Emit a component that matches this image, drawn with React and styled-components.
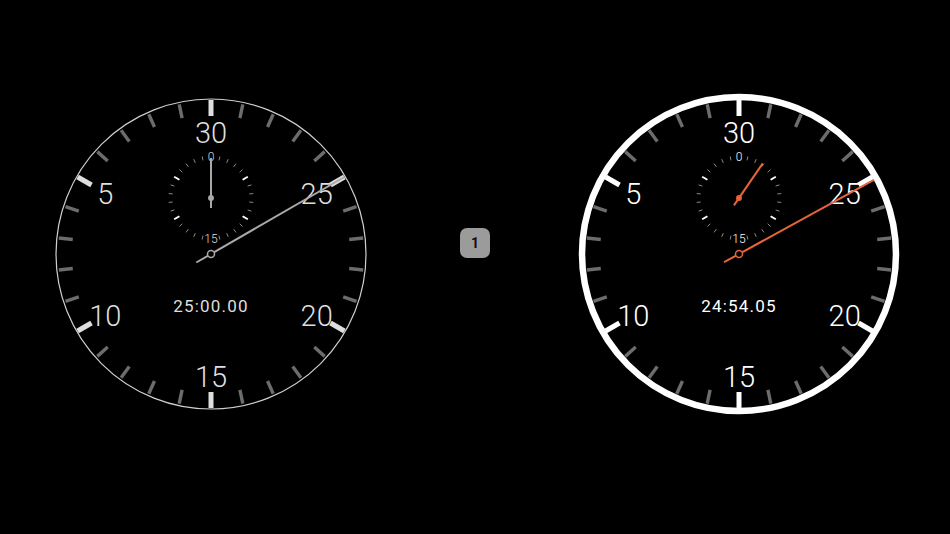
import React from 'react';
import styled, {createGlobalStyle} from "styled-components";

const GlobalStyle = createGlobalStyle`
  html, body { margin: 0; padding: 0; background: #000; }
  body { width: 950px; height: 534px; overflow: hidden; font-family: Roboto, "Liberation Sans", sans-serif; }
`

const Page = styled.div`
  width: 950px;
  height: 534px;
  box-sizing: border-box;
  padding-top: 89px;
  display: flex;
  justify-content: center;
  align-items: flex-start;
  gap: 84px;
`

const DialSvg = styled.svg`
  width: 330px;
  height: 330px;
  flex: none;
  display: block;
`

const CenterSlot = styled.div`
  padding-top: 139px;
`

const LapButton = styled.div`
  width: 30px;
  height: 30px;
  border-radius: 7px;
  background: #9b9b9b;
  color: #111;
  font-family: Roboto, "Liberation Sans", sans-serif;
  font-weight: 700;
  font-size: 14px;
  display: flex;
  align-items: center;
  justify-content: center;
`

const Ring = styled.circle`
  fill: none;
  stroke: ${p => p.$bold ? '#fff' : '#cfcfcf'};
  stroke-width: ${p => p.$bold ? 6.5 : 1.2};
`

const Tick = styled.line`
  stroke: ${p => p.$color};
  stroke-width: ${p => p.$w};
`

const Numeral = styled.text`
  fill: ${p => p.$color};
  font-family: Roboto, "Liberation Sans", sans-serif;
  font-weight: 300;
  font-size: ${p => p.$size}px;
  text-anchor: middle;
  dominant-baseline: central;
`

const Readout = styled.text`
  fill: ${p => p.$color};
  font-family: Roboto, "Liberation Sans", sans-serif;
  font-weight: 400;
  font-size: 17px;
  letter-spacing: 1.2px;
  text-anchor: middle;
  dominant-baseline: central;
`

const Hand = styled.line`
  stroke: ${p => p.$color};
  stroke-width: ${p => p.$w || 2};
`

const Pivot = styled.circle`
  fill: ${p => p.$filled ? p.$color : '#000'};
  stroke: ${p => p.$color};
  stroke-width: 1.5;
`

const polar = (r, deg) => {
    const a = deg * Math.PI / 180;
    return [r * Math.sin(a), -r * Math.cos(a)];
};

const SUB_Y = -56;

const Dial = ({bold, time, main, sub, hand}) => {
    const bright = bold ? '#fff' : '#dedede';
    const ticks = Array.from({length: 30}, (_, i) => i);
    return (
        <DialSvg viewBox="-165 -165 330 330">
            <Ring r={bold ? 157 : 155} $bold={bold}/>
            {ticks.map(i => {
                const major = i % 5 === 0;
                const [x1, y1] = polar(major ? 138 : 139, -i * 12);
                const [x2, y2] = polar(major ? 154 : 153, -i * 12);
                return <Tick key={i} x1={x1} y1={y1} x2={x2} y2={y2}
                             $color={major ? bright : '#6c6c6c'} $w={major ? 5 : 3.4}/>;
            })}
            {[0, 5, 10, 15, 20, 25].map(n => {
                const [x, y] = polar(122, -n * 12);
                return <Numeral key={n} x={x} y={y + 1} $size={29} $color={bright}>{n === 0 ? 30 : n}</Numeral>;
            })}
            <g transform={`translate(0 ${SUB_Y})`}>
                {ticks.filter(i => i !== 0 && i !== 15).map(i => {
                    const major = i % 5 === 0;
                    const [x1, y1] = polar(major ? 36.5 : 38.5, i * 12);
                    const [x2, y2] = polar(42.5, i * 12);
                    return <Tick key={i} x1={x1} y1={y1} x2={x2} y2={y2}
                                 $color={major ? '#fff' : '#8a8a8a'} $w={major ? 2 : 1}/>;
                })}
                <Numeral x={0} y={-41} $size={12} $color={bright}>0</Numeral>
                <Numeral x={0} y={41} $size={12} $color={bright}>15</Numeral>
                {(() => {
                    const [x1, y1] = polar(-sub.tail, sub.angle);
                    const [x2, y2] = polar(sub.len, sub.angle);
                    return <Hand x1={x1} y1={y1} x2={x2} y2={y2} $color={hand}/>;
                })()}
                <Pivot r={2.2} $filled $color={hand}/>
            </g>
            <Readout x={0} y={52} $color={bright}>{time}</Readout>
            {(() => {
                const [x1, y1] = polar(-17, main);
                const [x2, y2] = polar(154, main);
                return <Hand x1={x1} y1={y1} x2={x2} y2={y2} $color={hand}/>;
            })()}
            <Pivot r={3.5} $color={hand}/>
        </DialSvg>
    );
};

const App = () => {
    return (<>
        <GlobalStyle/>
        <Page>
            <Dial time="25:00.00" main={60} sub={{angle: 0, len: 40, tail: 10}} hand="#a9a9a9"/>
            <CenterSlot><LapButton>1</LapButton></CenterSlot>
            <Dial bold time="24:54.05" main={61.2} sub={{angle: 34.4, len: 42, tail: 9}} hand="#e8643c"/>
        </Page>
    </>);
};

export default App;
